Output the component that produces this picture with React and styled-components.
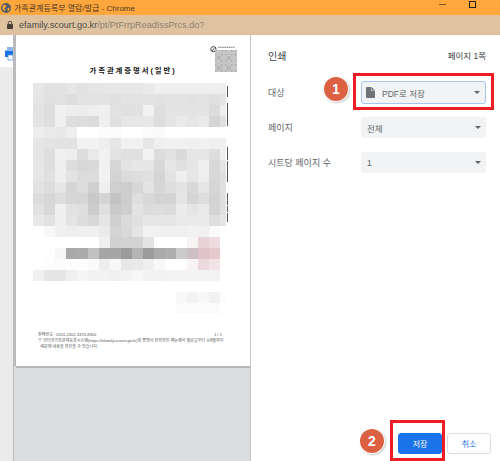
import React from 'react';
import styled, { createGlobalStyle } from 'styled-components';

const Global = createGlobalStyle`
  html, body {
    margin: 0;
    padding: 0;
    background: #fff;
  }
  body {
    font-family: "Liberation Sans", "Noto Sans CJK KR", sans-serif;
  }
`;

const Win = styled.div`
  width: 500px;
  height: 461px;
  display: flex;
  flex-direction: column;
  overflow: hidden;
`;

const TitleBar = styled.div`
  height: 15px;
  flex: none;
  background: #ffa63c;
  display: flex;
  align-items: center;
  padding-left: 1px;
  color: #4a3a22;
  font-size: 8px;
`;

const TitleText = styled.span`
  margin-left: 3px;
  flex: 1;
  white-space: nowrap;
`;

const WinBtns = styled.div`
  display: flex;
  align-items: flex-start;
  align-self: flex-start;
  padding: 1px 24px 0 0;
  gap: 23px;
`;

const MinBtn = styled.i`
  display: block;
  width: 7px;
  height: 1px;
  margin-top: 3px;
  background: #7a5a30;
`;

const MaxBtn = styled.i`
  display: block;
  width: 7px;
  height: 7px;
  box-sizing: border-box;
  border: 1px solid #2c2416;
`;

const AddrBar = styled.div`
  height: 20px;
  flex: none;
  background: #dfc3a0;
  display: flex;
  align-items: center;
  padding-left: 7px;
  font-size: 9.1px;
  color: #8d7f72;
`;

const Host = styled.span`
  color: #4b4a4a;
  margin-left: 6px;
`;

const Main = styled.div`
  flex: 1;
  display: flex;
  min-height: 0;
`;

const Side = styled.div`
  width: 13px;
  flex: none;
  background: #ececec;
  border-right: 1px solid #bcbcc0;
  box-sizing: content-box;
`;

const SideTop = styled.div`
  height: 32px;
  box-sizing: border-box;
  background: #fff;
  display: flex;
  align-items: flex-start;
  justify-content: flex-end;
  padding-top: 12px;
  overflow: hidden;
`;

const Preview = styled.div`
  width: 236px;
  flex: none;
  background: #dcdde1;
  padding-left: 2px;
  box-sizing: border-box;
`;

const Page = styled.div`
  width: 234px;
  height: 331px;
  background: #fff;
  box-shadow: -2px 0 0 #b9b9be, 0 2px 0 #b5b5ba, 1px 0 0 #b5b5bb, 1px 2px 0 #b5b5ba;
  display: flex;
  flex-direction: column;
  padding-top: 11px;
  box-sizing: border-box;
`;

const QrBlock = styled.div`
  align-self: flex-end;
  margin-right: 13px;
  line-height: 0;
`;

const DocTitle = styled.div`
  margin-top: -7px;
  text-align: center;
  font-size: 7.4px;
  line-height: 10px;
  font-weight: 700;
  letter-spacing: 1.9px;
  color: #111;
`;

const Mosaic = styled.div`
  position: relative;
  margin: 7px 0 0 17px;
  display: grid;
  grid-template-columns: repeat(17, 11px) 6px;
  grid-auto-rows: 11px;
  width: 193px;
`;

const Cell = styled.i.attrs(p => ({ style: { background: p.$c } }))`
  display: block;
`;

const Bracket = styled.i.attrs(p => ({ style: { top: p.$top, height: p.$h } }))`
  position: absolute;
  left: 194px;
  width: 1px;
  background: #555;
`;

const Foot = styled.div`
  margin-top: auto;
  padding: 0 28px 17px 22px;
  font-size: 4.05px;
  line-height: 5.5px;
  color: #555;
  white-space: nowrap;
`;

const FootTop = styled.div`
  display: flex;
  justify-content: space-between;
  margin-bottom: 0.5px;
`;

const Panel = styled.div`
  flex: 1;
  background: #fff;
  padding: 0 14px 0 17px;
  border-left: 1px solid #c4c4c8;
  display: flex;
  flex-direction: column;
  min-width: 0;
`;

const PanelHead = styled.div`
  height: 40px;
  display: flex;
  align-items: center;
  justify-content: space-between;
`;

const Heading = styled.h1`
  margin: 0;
  font-size: 10px;
  font-weight: 400;
  color: #3c4043;
`;

const PageCount = styled.span`
  font-size: 8.5px;
  color: #3c4043;
`;

const Row = styled.div`
  display: flex;
  align-items: center;
  justify-content: space-between;
  margin-top: ${p => p.$mt}px;
`;

const Label = styled.span`
  font-size: 9px;
  color: #5f6368;
  white-space: nowrap;
`;

const SelectBox = styled.div`
  position: relative;
  width: 125px;
  height: ${p => (p.$active ? 23 : 21)}px;
  box-sizing: border-box;
  background: #f1f3f4;
  border-radius: 3px;
  border: ${p => (p.$active ? '1px solid #a4c6f5' : 'none')};
  display: flex;
  align-items: center;
  padding: 0 5px 0 ${p => (p.$active ? 4 : 6)}px;
  font-size: 8.5px;
  color: #5f6368;
`;

const SelectText = styled.span`
  flex: 1;
  margin-left: ${p => (p.$icon ? 7 : 0)}px;
`;

const Caret = styled.i`
  width: 0;
  height: 0;
  border-left: 3.5px solid transparent;
  border-right: 3.5px solid transparent;
  border-top: 3.5px solid #5f6368;
`;

const RedBox = styled.div`
  position: absolute;
  border: 3px solid #ee1c25;
  box-sizing: border-box;
  pointer-events: none;
  left: ${p => p.$l}px;
  top: ${p => p.$t}px;
  width: ${p => p.$w}px;
  height: ${p => p.$h}px;
`;

const Badge = styled.div`
  position: absolute;
  left: ${p => p.$l}px;
  top: ${p => p.$t}px;
  width: 24px;
  height: 24px;
  border-radius: 50%;
  background: #dc6042;
  box-shadow: 0 0 0 1px #fff, 1px 1px 2px 1px #c9c9c9;
  color: #fff;
  font-weight: 700;
  font-size: 14px;
  display: flex;
  align-items: center;
  justify-content: center;
`;

const Footer = styled.div`
  position: relative;
  margin: auto -5px 0 0;
  padding-bottom: 7px;
  display: flex;
  justify-content: flex-end;
  gap: 5px;
`;

const Btn = styled.button`
  width: 44px;
  height: 21px;
  padding: 0;
  box-sizing: border-box;
  border-radius: 3px;
  font: inherit;
  font-size: 8px;
  border: 1px solid ${p => (p.$primary ? '#1a73e8' : '#dadce0')};
  background: ${p => (p.$primary ? '#1a73e8' : '#fff')};
  color: ${p => (p.$primary ? '#fff' : '#1a73e8')};
`;

const Globe = () => (
  <svg width="10" height="10" viewBox="0 0 10 10">
    <circle cx="5" cy="5" r="5" fill="#4f5b66" />
    <path d="M2 2.5 L4.5 1.5 L5.5 3.5 L3.5 5 L4.5 7.5 L3 8 L1.2 5 Z M6.5 5 L8.8 4.8 L8 7.5 L6.5 8 Z" fill="#ffa63c" />
  </svg>
);

const Lock = () => (
  <svg width="6" height="8" viewBox="0 0 6 8">
    <path d="M1.3 3.2 V2 a1.7 1.7 0 0 1 3.4 0 V3.2" fill="none" stroke="#4a4238" strokeWidth="0.9" />
    <rect x="0" y="3" width="6" height="5" rx="0.7" fill="#4a4238" />
  </svg>
);

const Printer = () => (
  <svg width="8" height="14" viewBox="0 0 8 14" style={{ flex: 'none' }}>
    <rect x="2" y="0" width="6" height="3" fill="#8db6ee" />
    <path d="M0 3.5 H8 V10 H5 V8 H3 V10 H0 Z" fill="#1a73e8" />
    <rect x="3" y="8" width="5" height="5" fill="#fff" stroke="#5e9bec" strokeWidth="0.8" />
  </svg>
);

const FileIcon = () => (
  <svg width="9" height="11" viewBox="0 0 9 11" style={{ flex: 'none' }}>
    <path d="M0.8 0 H5.6 L9 3.4 V10 a1 1 0 0 1 -1 1 H1 a1 1 0 0 1 -1 -1 V1 a1 1 0 0 1 0.8 -1 Z" fill="#6e7276" />
    <path d="M5.4 0.4 V3.6 H8.6" fill="none" stroke="#f1f3f4" strokeWidth="0.6" />
  </svg>
);

// fake qr, only has to read as grey noise at this size
const qrCells = [];
for (let y = 0; y < 11; y++) {
  for (let x = 0; x < 11; x++) {
    qrCells.push({ x, y, on: (x * 7 + y * 13 + x * y * 3) % 5 < 2 });
  }
}

const QrCode = () => (
  <svg width="27" height="27" viewBox="0 0 27 27">
    <circle cx="3.4" cy="3.2" r="2.6" fill="none" stroke="#333" strokeWidth="0.9" />
    <path d="M2 5 L5 1.5" stroke="#333" strokeWidth="0.8" />
    <path d="M8 1.2 H25" stroke="#777" strokeWidth="1.1" strokeDasharray="1.6 0.5" />
    <rect x="5" y="4" width="22" height="22" fill="#c6c6c6" />
    {qrCells.filter(c => c.on).map(c => (
      <rect key={`${c.x}-${c.y}`} x={5 + c.x * 2} y={4 + c.y * 2} width="1.4" height="1.4" fill="#a9a9a9" />
    ))}
  </svg>
);

const mosaicRows = [
  'e6 e2 e2 e6 e2 e5 e6 e6 e6 e6 ea ef ef ef ef ef ef ef',
  'e5 e0 e1 dd e3 e3 e3 e0 e3 e3 e3 e1 e3 e3 e1 e3 e0 e4',
  'e3 dd f0 ee ec ee f0 e2 e0 e0 f2 de e4 e4 e4 e4 dc f0',
  'e4 de f0 de dd dc ef e0 e6 e6 e7 dd e4 ea e6 ea d5 e0',
  'ee ea e8 ee ff ff fc fb ff ff fb fa ff ff ff ff ff ff',
  'e6 e4 e2 e2 f2 f2 ee e6 f1 f1 e6 ef f1 f1 f0 f1 ef f0',
  'e5 de f0 ed dd e9 f1 e3 e0 e0 f2 dd e1 da e6 e6 de f0',
  'e6 de ef dd d7 da f1 d6 e3 e7 e6 d8 e7 e0 e6 ef d8 e5',
  'e6 e0 ee e3 dc dc f1 d3 db dd e0 d5 e3 ef e6 ee d8 e0',
  'e3 dd e7 d5 dd cf ef cf cd d6 e3 d6 df e3 d8 e6 d6 e0',
  'dd d7 dd d6 d6 c9 d4 c3 cd de d8 d3 d3 e5 d5 dd d3 e0',
  'e2 d8 ef e2 df cc e0 ca ce e3 dc dd db ec e5 e9 d4 e0',
  'e8 e2 ef e4 dd d8 e5 cf da e0 e6 e6 e6 e9 ea ea de e5',
  'ff f7 f0 ee ef f0 ea d5 d9 e4 f2 f0 f0 f0 f2 f0 fa ff',
  'ff ff ff ff ff ff ef d1 d3 d2 e3 ff ff ff f8f4f4 e8d4d8 ecdcdf ff',
  'ff ff f6 a9 ab c1 a6 a6 9c b4 9b aa ae cb ccc0c4 e0c3c8 e5c9cd ff',
  'ff fd fc fd fd fb ee f7 e8 e9 ef f8 fe ff f8f4f4 ecd9dd f2e4e6 ff',
  'f0 e5 e5 ef f5 f2 f2 f0 f2 f7 f2 f2 f3 f3 f3 f3 f3 ff',
  'ff ff ff ff ff ff ff ff ff ff ff ff ff ff ff ff ff ff',
  'ff ff ff ff ff ff ff ff ff ff ff ff ff f8 f3 f8 f2 fc',
  'ff ff ff ff ff ff ff ff ff ff ff ff ff fb fb fc fb ff',
];

const toColor = v => (v.length === 2 ? `#${v}${v}${v}` : `#${v}`);

const brackets = [
  [3, 11], [20, 23], [64, 13], [78, 21], [110, 12], [123, 6], [130, 9],
];

const Doc = () => (
  <Page>
    <QrBlock>
      <QrCode />
    </QrBlock>
    <DocTitle>가족관계증명서(일반)</DocTitle>
    <Mosaic>
      {mosaicRows.map((row, r) =>
        row.split(' ').map((v, c) => <Cell key={`${r}-${c}`} $c={toColor(v)} />)
      )}
      {brackets.map(([top, h]) => (
        <Bracket key={top} $top={top} $h={h} />
      ))}
    </Mosaic>
    <Foot>
      <FootTop>
        <span>판매번호 : 0101-2002-3370-8300</span>
        <span>1 / 1</span>
      </FootTop>
      <div>※ 인터넷가족관계등록시스템(https://efamily.scourt.go.kr)의 증명서 진위확인 메뉴에서 발급일부터 3개월까지</div>
      <div>&nbsp;&nbsp;때문에 내용을 확인할 수 있습니다.</div>
    </Foot>
  </Page>
);

export default function App() {
  return (
    <Win>
      <Global />
      <TitleBar>
        <Globe />
        <TitleText>가족관계등록부 열람/발급 - Chrome</TitleText>
        <WinBtns>
          <MinBtn />
          <MaxBtn />
        </WinBtns>
      </TitleBar>
      <AddrBar>
        <Lock />
        <Host>efamily.scourt.go.kr</Host>
        <span>/pt/PtFrrpReadIssPrcs.do?</span>
      </AddrBar>
      <Main>
        <Side>
          <SideTop>
            <Printer />
          </SideTop>
        </Side>
        <Preview>
          <Doc />
        </Preview>
        <Panel>
          <PanelHead>
            <Heading>인쇄</Heading>
            <PageCount>페이지 1쪽</PageCount>
          </PanelHead>
          <Row $mt={6}>
            <Label>대상</Label>
            <SelectBox $active>
              <FileIcon />
              <SelectText $icon>PDF로 저장</SelectText>
              <Caret />
              <RedBox $l={-9} $t={-9} $w={141} $h={37} />
              <Badge $l={-38} $t={-5}>1</Badge>
            </SelectBox>
          </Row>
          <Row $mt={13}>
            <Label>페이지</Label>
            <SelectBox>
              <SelectText>전체</SelectText>
              <Caret />
            </SelectBox>
          </Row>
          <Row $mt={14}>
            <Label>시트당 페이지 수</Label>
            <SelectBox>
              <SelectText>1</SelectText>
              <Caret />
            </SelectBox>
          </Row>
          <Footer>
            <RedBox $l={122} $t={-13} $w={55} $h={41} />
            <Badge $l={92} $t={-4}>2</Badge>
            <Btn $primary>저장</Btn>
            <Btn>취소</Btn>
          </Footer>
        </Panel>
      </Main>
    </Win>
  );
}
